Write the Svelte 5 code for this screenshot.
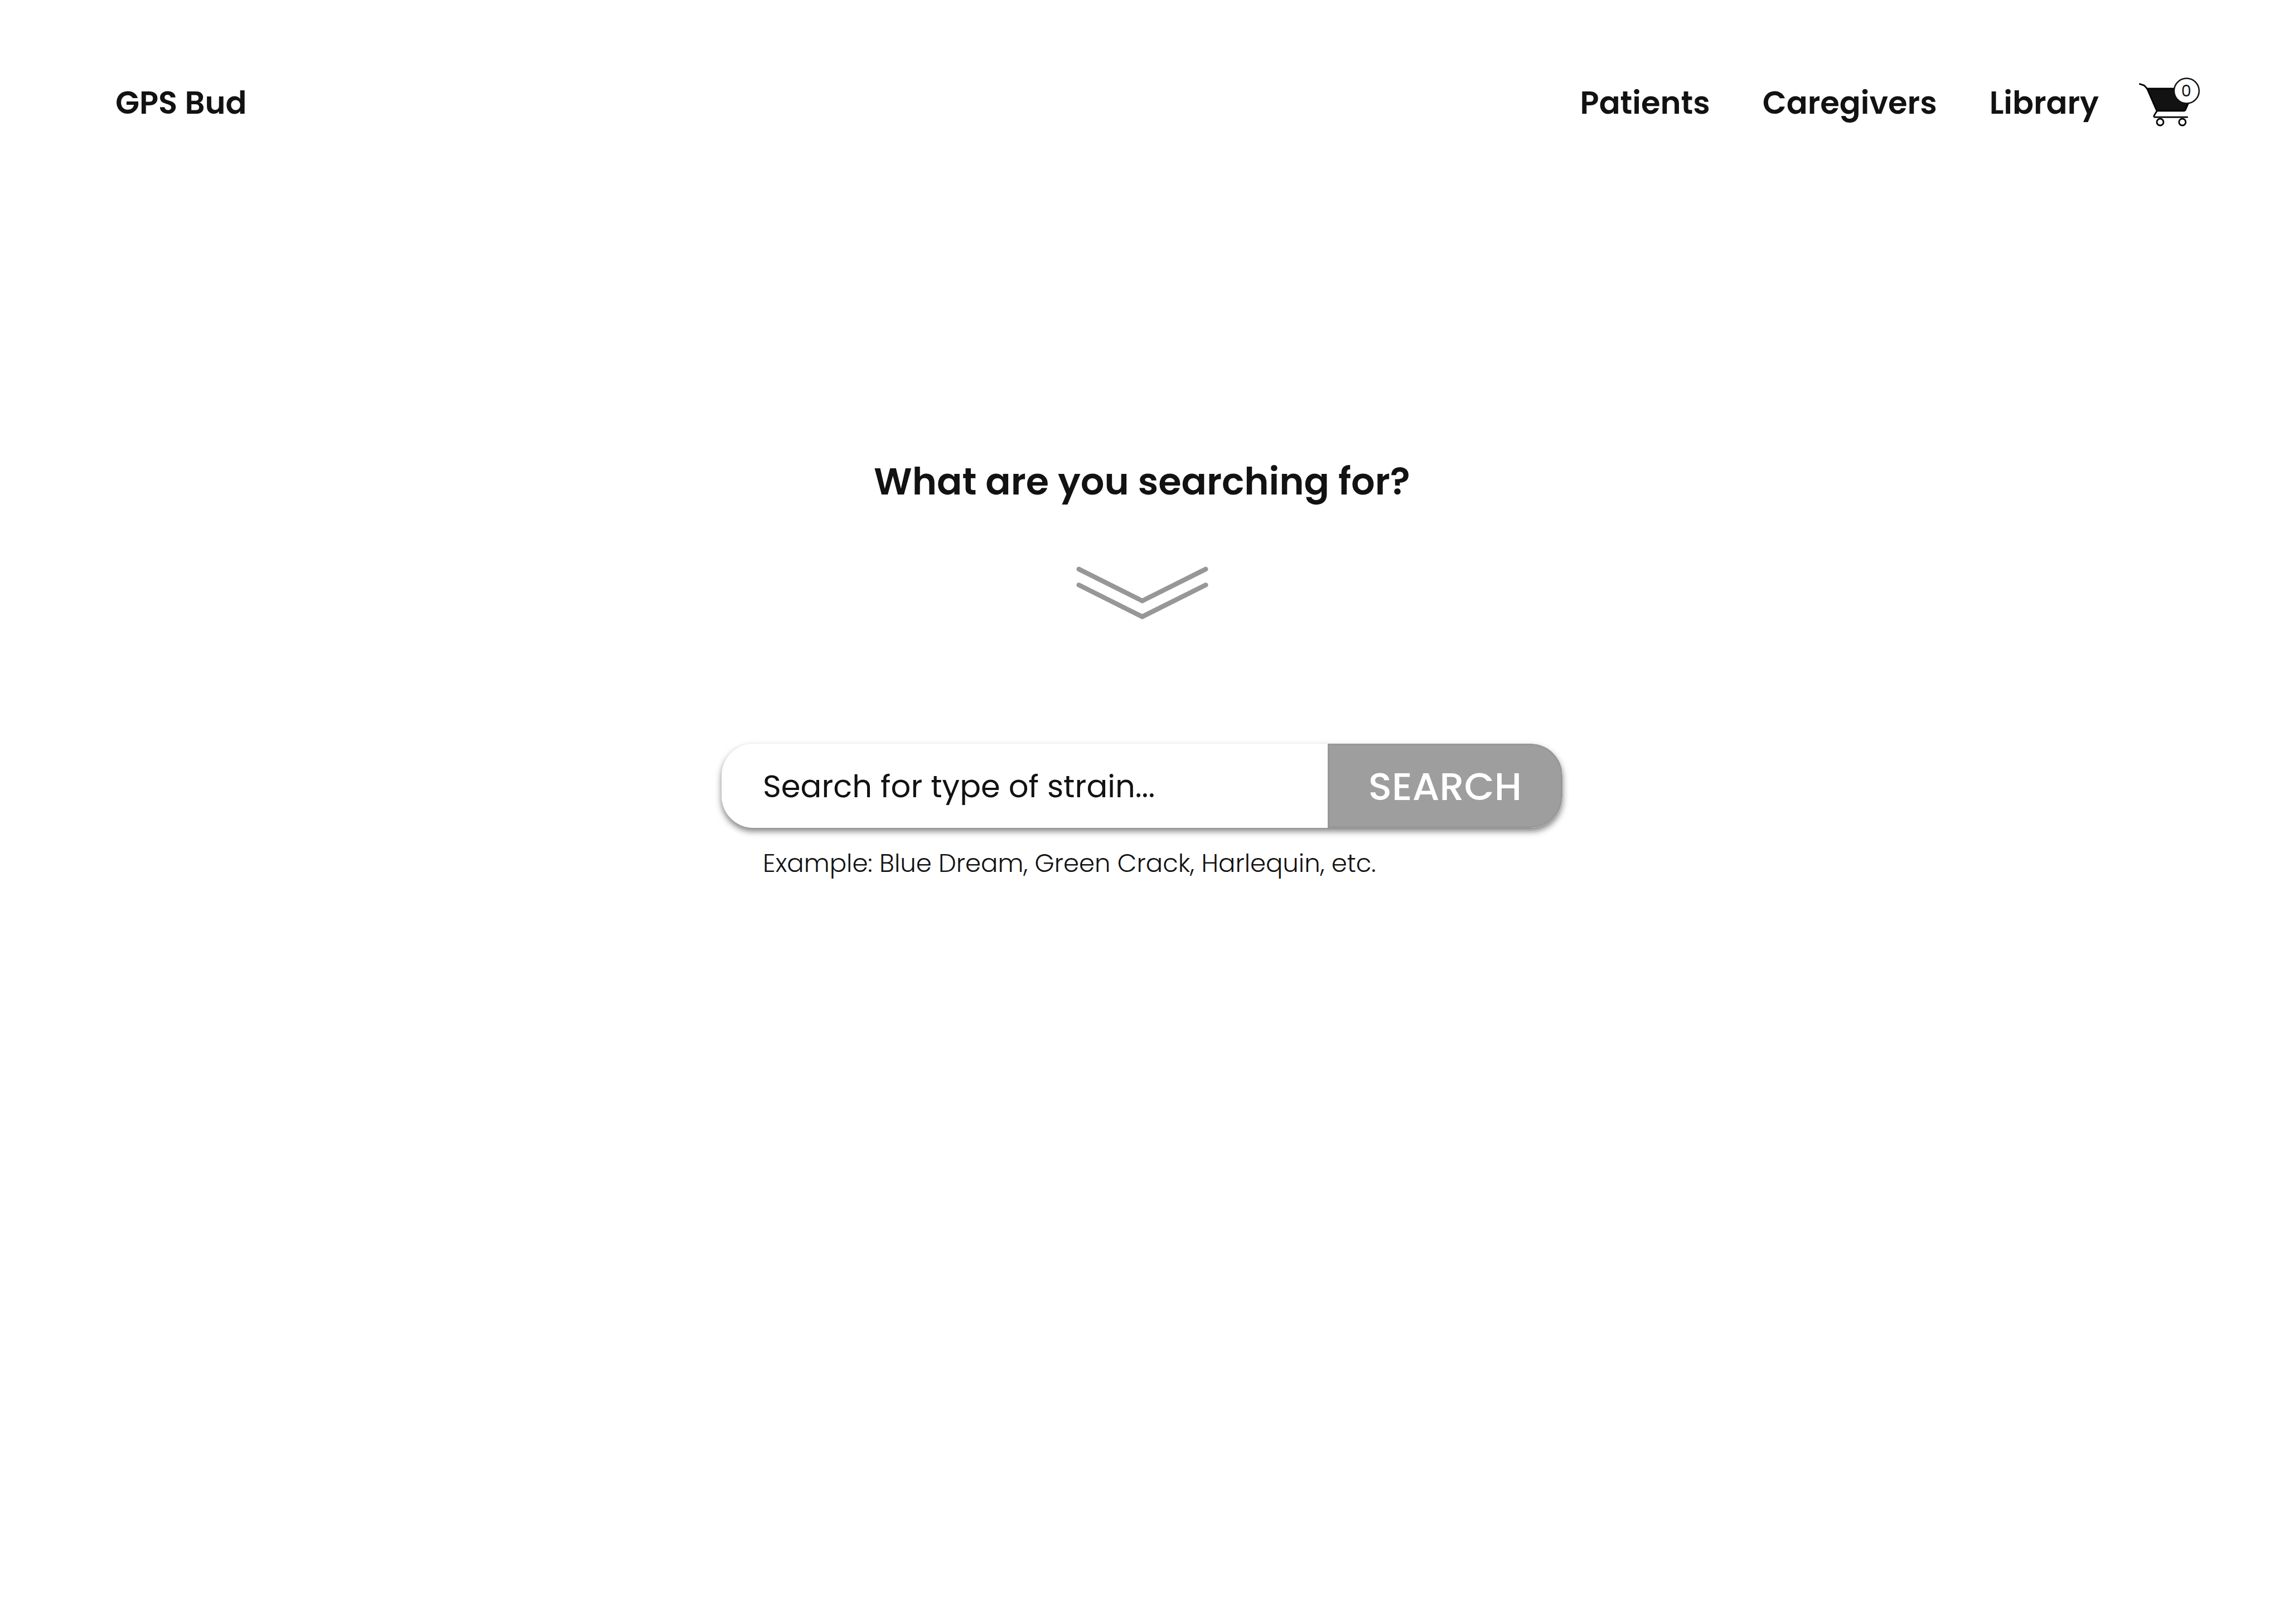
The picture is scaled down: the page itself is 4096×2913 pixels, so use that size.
<script>
  const links = ['Patients', 'Caregivers', 'Library'];
  let cartCount = $state(0);
  let query = $state('');
</script>

<header>
  <a class="brand" href="#home">GPS Bud</a>
  <nav aria-label="Main">
    {#each links as link}
      <a href={`#${link.toLowerCase()}`}>{link}</a>
    {/each}
  </nav>
  <a class="cart" href="#cart" aria-label="Shopping cart">
    <svg viewBox="78 50 345 291" fill="none" stroke="#000" stroke-width="9" stroke-linecap="round" stroke-linejoin="round">
      <path d="M82 87 L104 94 Q109 96 113 101 L124 113" />
      <path fill="#121212" d="M124 113 H394 L341 234 Q338 239 332 239 H184 Q179 239 177 235 Z" />
      <path d="M180 240 L164 265 Q160 275 168 275 H352" />
      <circle cx="198" cy="303" r="19" />
      <circle cx="324" cy="303" r="19" />
      <circle cx="348" cy="126" r="71" fill="#fff" stroke="#121212" stroke-width="8" />
      <text class="count" x="346" y="158" text-anchor="middle">{cartCount}</text>
    </svg>
  </a>
</header>

<main>
  <h1>What are you searching for?</h1>
  <svg class="chevron" viewBox="0 0 250 100" fill="none" stroke="#979797" stroke-width="9" stroke-linecap="round" aria-hidden="true">
    <path d="M5 5 L125 65 L245 5" />
    <path d="M5 35 L125 95 L245 35" />
  </svg>
  <div class="finder">
    <form role="search" onsubmit={(e) => e.preventDefault()}>
      <input type="text" aria-label="Search for type of strain" aria-describedby="hint" placeholder="Search for type of strain..." bind:value={query} />
      <button type="submit">SEARCH</button>
    </form>
    <p id="hint">Example: Blue Dream, Green Crack, Harlequin, etc.</p>
  </div>
</main>

<style>
  :global(body) {
    margin: 0;
    background: #fff;
    color: #121212;
    font-family: Poppins, Inter, sans-serif;
  }

  header {
    display: flex;
    align-items: center;
    padding: 139px 151px 0 207px;
    font-size: 56px;
    line-height: 84px;
    font-weight: 600;
  }

  a {
    color: inherit;
    text-decoration: none;
  }

  nav {
    display: flex;
    gap: 94px;
    margin-left: auto;
  }

  .cart {
    display: flex;
    margin-left: 72px;
  }

  .cart svg {
    width: 109px;
    height: 92px;
  }

  .count {
    fill: #121212;
    stroke: none;
    font-size: 90px;
    font-weight: 400;
  }

  main {
    display: flex;
    flex-direction: column;
    align-items: center;
    padding: 583px 80px 160px;
  }

  h1 {
    margin: 0;
    font-size: 67px;
    line-height: 100px;
    font-weight: 600;
  }

  .chevron {
    width: 237px;
    height: 95px;
    margin-top: 102px;
  }

  .finder {
    width: 100%;
    max-width: 1508px;
    margin-top: 223px;
  }

  form {
    display: flex;
    height: 151px;
    border-radius: 57px;
    background: #fff;
    box-shadow: 0 6px 12px rgba(0, 0, 0, 0.5);
    overflow: hidden;
  }

  input {
    flex: 1;
    min-width: 0;
    padding: 2px 40px 0 74px;
    border: 0;
    outline: 0;
    background: transparent;
    color: #121212;
    font: 400 56px/84px Poppins, Inter, sans-serif;
  }

  input::placeholder {
    color: #121212;
    opacity: 1;
  }

  button {
    width: 421px;
    padding: 2px 0 0;
    border: 3px solid #979797;
    border-radius: 0 57px 57px 0;
    background: #9e9e9e;
    color: #fff;
    font: 500 70px/100px Poppins, Inter, sans-serif;
  }

  p {
    margin: 31px 0 0;
    padding-left: 74px;
    font-size: 45px;
    line-height: 66px;
    font-weight: 300;
  }
</style>
